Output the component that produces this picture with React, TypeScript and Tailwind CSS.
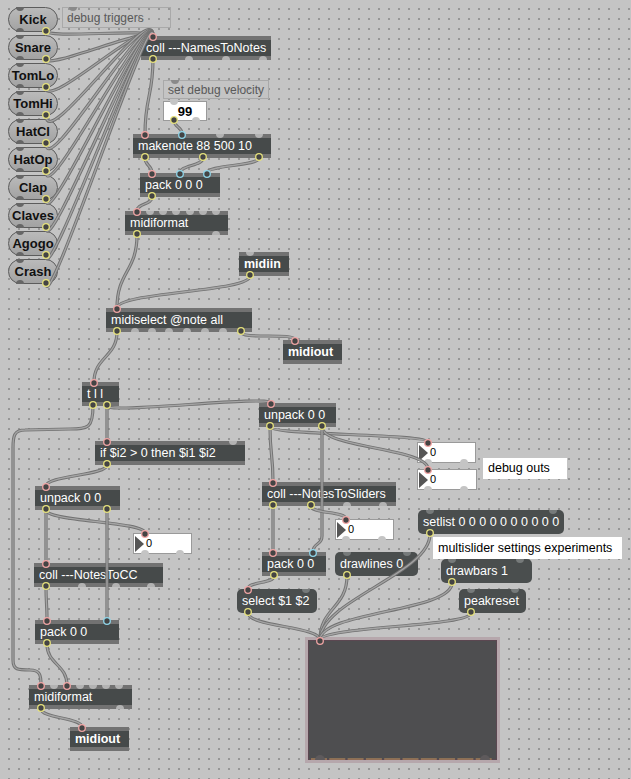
import React from 'react';

type Port = [number, string];
type Box = {
  k: 'obj' | 'msg' | 'btn' | 'num' | 'cmt' | 'cmtw';
  x: number;
  y: number;
  w: number;
  h?: number;
  t: string;
  b?: boolean;
  tri?: boolean;
  i?: Port[];
  o?: Port[];
};

const drums = ['Kick', 'Snare', 'TomLo', 'TomHi', 'HatCl', 'HatOp', 'Clap', 'Claves', 'Agogo', 'Crash'];

const boxes: Box[] = [
  ...drums.map((d, n): Box => ({ k: 'btn', x: 8, y: 7 + 28 * n, w: 50, h: 25, t: d, i: [[20, 'n']], o: [[20, 'n'], [46, 'y']] })),
  { k: 'cmt', x: 62, y: 7, w: 109, h: 21, t: 'debug triggers', i: [[73, 'n']] },
  { k: 'obj', x: 141, y: 36, w: 130, t: 'coll ---NamesToNotes', i: [[153, 'p']], o: [[153, 'y'], [189, 'n'], [226, 'n'], [263, 'n']] },
  { k: 'cmt', x: 163, y: 80, w: 106, h: 19, t: 'set debug velocity', i: [[175, 'n']] },
  { k: 'num', x: 163, y: 101, w: 44, h: 20, t: '99', b: true, i: [[174, 'n']], o: [[174, 'y'], [196, 'n']] },
  { k: 'obj', x: 133, y: 134, w: 138, t: 'makenote 88 500 10', i: [[145, 'p'], [182, 'c'], [220, 'n'], [259, 'n']], o: [[145, 'y'], [203, 'y'], [259, 'y']] },
  { k: 'obj', x: 140, y: 173, w: 80, t: 'pack 0 0 0', i: [[152, 'p'], [180, 'c'], [207, 'c']], o: [[152, 'y']] },
  { k: 'obj', x: 125, y: 211, w: 103, t: 'midiformat', i: [[137, 'p'], [150, 'n'], [163, 'n'], [176, 'n'], [190, 'n'], [203, 'n'], [216, 'n']], o: [[137, 'y'], [216, 'n']] },
  { k: 'obj', x: 239, y: 252, w: 50, t: 'midiin', b: true, i: [[250, 'n']], o: [[250, 'y']] },
  { k: 'obj', x: 106, y: 308, w: 146, t: 'midiselect @note all', i: [[117, 'p']], o: [[117, 'y'], [135, 'n'], [152, 'n'], [169, 'n'], [187, 'n'], [205, 'n'], [223, 'n'], [241, 'y']] },
  { k: 'obj', x: 283, y: 340, w: 59, t: 'midiout', b: true, i: [[295, 'p']] },
  { k: 'obj', x: 82, y: 382, w: 37, t: 't l l', i: [[94, 'p']], o: [[93, 'y'], [107, 'y']] },
  { k: 'obj', x: 259, y: 403, w: 77, t: 'unpack 0 0', i: [[271, 'p']], o: [[270, 'y'], [322, 'y']] },
  { k: 'obj', x: 95, y: 441, w: 150, t: 'if $i2 > 0 then $i1 $i2', i: [[107, 'p'], [233, 'n']], o: [[107, 'y']] },
  { k: 'num', x: 417, y: 442, w: 59, h: 21, t: '0', tri: true, i: [[428, 'p']], o: [[428, 'n'], [464, 'n']] },
  { k: 'num', x: 417, y: 469, w: 60, h: 21, t: '0', tri: true, i: [[428, 'p']], o: [[428, 'n'], [464, 'n']] },
  { k: 'cmtw', x: 483, y: 458, w: 84, h: 21, t: 'debug outs' },
  { k: 'obj', x: 262, y: 482, w: 134, t: 'coll ---NotesToSliders', i: [[273, 'p']], o: [[273, 'y'], [311, 'y'], [347, 'n'], [383, 'n']] },
  { k: 'num', x: 335, y: 519, w: 59, h: 21, t: '0', tri: true, i: [[346, 'p']], o: [[346, 'n'], [382, 'n']] },
  { k: 'msg', x: 418, y: 510, w: 146, t: 'setlist 0 0 0 0 0 0 0 0 0 0', i: [[430, 'n'], [553, 'n']], o: [[430, 'y']] },
  { k: 'cmtw', x: 433, y: 537, w: 189, h: 22, t: 'multislider settings experiments' },
  { k: 'obj', x: 262, y: 552, w: 64, t: 'pack 0 0', i: [[273, 'p'], [313, 'c']], o: [[274, 'y']] },
  { k: 'msg', x: 335, y: 552, w: 83, t: 'drawlines 0', i: [[347, 'n'], [407, 'n']], o: [[347, 'y']] },
  { k: 'msg', x: 441, y: 559, w: 91, t: 'drawbars 1', i: [[452, 'n'], [520, 'n']], o: [[452, 'y']] },
  { k: 'msg', x: 237, y: 589, w: 80, t: 'select $1 $2', i: [[248, 'p'], [306, 'n']], o: [[248, 'y']] },
  { k: 'msg', x: 459, y: 589, w: 67, t: 'peakreset', i: [[471, 'n'], [515, 'n']], o: [[471, 'y']] },
  { k: 'obj', x: 35, y: 486, w: 85, t: 'unpack 0 0', i: [[46, 'p']], o: [[46, 'y'], [107, 'y']] },
  { k: 'num', x: 133, y: 533, w: 59, h: 21, t: '0', tri: true, i: [[145, 'p']], o: [[145, 'n'], [180, 'n']] },
  { k: 'obj', x: 34, y: 563, w: 129, t: 'coll ---NotesToCC', i: [[46, 'p']], o: [[46, 'y'], [82, 'n'], [116, 'n'], [151, 'n']] },
  { k: 'obj', x: 35, y: 620, w: 84, t: 'pack 0 0', i: [[47, 'p'], [107, 'c']], o: [[47, 'y']] },
  { k: 'obj', x: 29, y: 685, w: 103, t: 'midiformat', i: [[41, 'p'], [54, 'n'], [67, 'p'], [80, 'n'], [93, 'n'], [106, 'n'], [119, 'n']], o: [[41, 'y'], [120, 'n']] },
  { k: 'obj', x: 70, y: 727, w: 59, t: 'midiout', b: true, i: [[82, 'p']] },
];

const cord = (x1: number, y1: number, x2: number, y2: number) => {
  const d = Math.max(8, Math.min(Math.abs(y2 - y1) * 0.5, 40));
  return `M${x1},${y1} C${x1},${y1 + d} ${x2},${y2 - d} ${x2},${y2}`;
};

const wires: string[] = [
  ...drums.map((_, n) => cord(46, 31 + 28 * n, 153, 36)),
  cord(153, 59, 145, 134),
  cord(174, 120, 182, 134),
  cord(145, 158, 152, 173),
  cord(203, 158, 180, 173),
  cord(259, 158, 207, 173),
  cord(152, 197, 137, 211),
  cord(137, 235, 117, 308),
  cord(250, 276, 117, 308),
  cord(117, 332, 94, 382),
  cord(241, 332, 295, 340),
  'M93,406 C93,428 88,429 70,429 L25,430 C14,430 13,436 13,448 L13,660 C13,670 18,670 30,670 C40,670 41,675 41,685',
  cord(107, 406, 271, 403),
  cord(107, 406, 107, 441),
  cord(107, 465, 46, 486),
  cord(270, 427, 428, 442),
  cord(270, 427, 273, 482),
  cord(322, 427, 428, 469),
  'M322,427 L322,536 C322,546 313,542 313,552',
  cord(273, 506, 273, 552),
  cord(311, 506, 346, 519),
  cord(274, 576, 248, 589),
  cord(248, 613, 320, 640),
  cord(347, 576, 320, 640),
  cord(430, 534, 320, 640),
  cord(452, 583, 320, 640),
  cord(471, 613, 320, 640),
  cord(46, 510, 46, 563),
  cord(46, 510, 145, 533),
  cord(107, 510, 107, 620),
  cord(46, 587, 47, 620),
  cord(47, 644, 67, 685),
  cord(41, 709, 82, 727),
];

const ringColor: Record<string, string> = { p: '#f0a4a4', c: '#8fd6ea', y: '#e6e27c' };
const humpColor: Record<string, string> = { obj: '#b3b3b3', msg: '#767a7a', btn: '#666666', num: '#c4c4c4', cmt: '#8a8a8a', cmtw: '#8a8a8a' };

function BoxView({ b }: { b: Box }) {
  const h = b.h ?? 24;
  const pos = { left: b.x, top: b.y, width: b.w, height: h };
  if (b.k === 'obj') {
    return (
      <div className="absolute flex flex-col bg-[#464a4a]" style={pos}>
        <div className="h-[4px] bg-[#727272]" />
        <div className={`flex flex-1 items-center whitespace-nowrap px-[5px] text-[12.5px] leading-none text-white ${b.b ? 'font-bold' : ''}`}>{b.t}</div>
        <div className="h-[4px] bg-[#727272]" />
      </div>
    );
  }
  if (b.k === 'msg') {
    return (
      <div className="absolute flex items-center whitespace-nowrap rounded-[5px] bg-[#4a4e4e] px-[5px] text-[12.5px] leading-none text-white" style={pos}>
        {b.t}
      </div>
    );
  }
  if (b.k === 'btn') {
    return (
      <div className="absolute flex items-center justify-center rounded-full border-[1.5px] border-[#5c5c5c] bg-gradient-to-b from-[#bababa] to-[#a2a2a2] text-[13px] font-bold leading-none text-[#111]" style={pos}>
        {b.t}
      </div>
    );
  }
  if (b.k === 'num') {
    return (
      <div className="absolute flex items-center border border-[#9a9a9a] bg-white text-[11px] leading-none text-black" style={pos}>
        {b.tri ? (
          <>
            <span className="ml-[1px] h-0 w-0 border-y-[8px] border-l-[9px] border-y-transparent border-l-[#555]" />
            <span className="ml-[2px]">{b.t}</span>
          </>
        ) : (
          <span className="w-full text-center text-[13px] font-bold">{b.t}</span>
        )}
      </div>
    );
  }
  if (b.k === 'cmt') {
    return (
      <div className="absolute flex items-center whitespace-nowrap border border-[#a9a9a9] px-[4px] text-[12px] leading-none text-[#5a5a5a]" style={pos}>
        {b.t}
      </div>
    );
  }
  return (
    <div className="absolute flex items-center whitespace-nowrap bg-white px-[5px] text-[12.5px] leading-none text-black" style={pos}>
      {b.t}
    </div>
  );
}

export default function App() {
  return (
    <div className="relative h-[779px] w-[631px] overflow-hidden bg-[#c4c4c4] bg-[radial-gradient(circle,#8a8a8a_0.6px,transparent_1.1px)] bg-[length:10px_10px] bg-[position:4px_4px] font-['Liberation_Sans',Arial,sans-serif]">
      {boxes.map((b, n) => (
        <BoxView key={n} b={b} />
      ))}

      {/* multislider */}
      <div className="absolute left-[305px] top-[637px] h-[126px] w-[195px] bg-[#b6a7ac] p-[3px]">
        <div className="h-full w-full border border-[#5b4751] bg-[#4e4e50]" />
      </div>

      <svg className="pointer-events-none absolute inset-0" width={631} height={779}>
        {boxes.map((b, n) => {
          const h = b.h ?? 24;
          const c = humpColor[b.k];
          return (
            <g key={n}>
              {(b.i ?? []).filter((p) => p[1] === 'n').map((p, m) => (
                <path key={'i' + m} d={`M${p[0] - 4},${b.y} A4,4 0 0 0 ${p[0] + 4},${b.y} Z`} fill={c} />
              ))}
              {(b.o ?? []).filter((p) => p[1] === 'n').map((p, m) => (
                <path key={'o' + m} d={`M${p[0] - 4},${b.y + h} A4,4 0 0 1 ${p[0] + 4},${b.y + h} Z`} fill={c} />
              ))}
            </g>
          );
        })}

        {/* multislider bottom */}
        {Array.from({ length: 10 }).map((_, n) => (
          <line key={n} x1={311 + n * 18.3} y1={759} x2={311 + n * 18.3 + 16} y2={759} stroke="#c8955c" strokeWidth={1} />
        ))}
        <path d="M315,760 A5,5 0 0 1 325,760 Z" fill="#5e5a5c" />
        <path d="M480,760 A5,5 0 0 1 490,760 Z" fill="#5e5a5c" />

        {wires.map((d, n) => (
          <g key={n}>
            <path d={d} fill="none" stroke="#727272" strokeWidth={3.2} strokeLinecap="round" />
            <path d={d} fill="none" stroke="#a4a4a4" strokeWidth={1.3} strokeLinecap="round" />
          </g>
        ))}

        {boxes.map((b, n) => {
          const h = b.h ?? 24;
          return (
            <g key={n}>
              {(b.i ?? []).filter((p) => p[1] !== 'n').map((p, m) => (
                <circle key={'i' + m} cx={p[0]} cy={b.y + 1} r={3.3} fill="#444" stroke={ringColor[p[1]]} strokeWidth={1.3} />
              ))}
              {(b.o ?? []).filter((p) => p[1] !== 'n').map((p, m) => (
                <circle key={'o' + m} cx={p[0]} cy={b.y + h - 1} r={3.3} fill="#444" stroke={ringColor[p[1]]} strokeWidth={1.3} />
              ))}
            </g>
          );
        })}
        <circle cx={320} cy={641} r={3.3} fill="#444" stroke="#f0a4a4" strokeWidth={1.3} />
      </svg>
    </div>
  );
}
